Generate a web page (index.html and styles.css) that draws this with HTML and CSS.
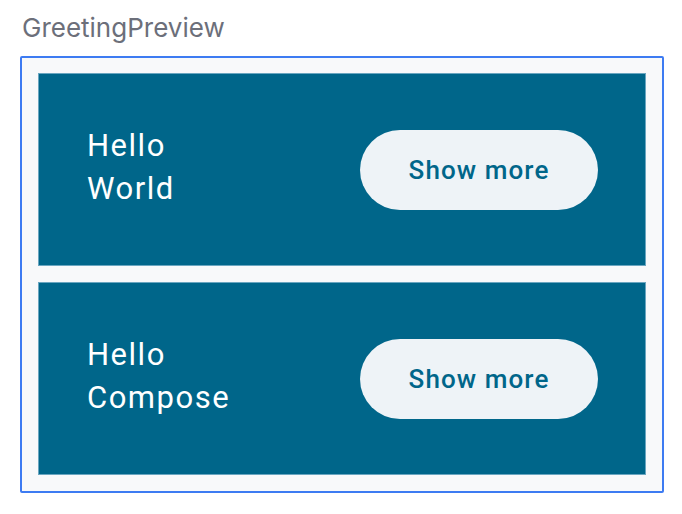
FILE: index.html
```html
<!DOCTYPE html>
<html>
<head>
<meta charset="utf-8">
<link rel="stylesheet" href="styles.css">
</head>
<body>
<div class="page">
  <div class="title">GreetingPreview</div>
  <div class="frame">
    <div class="card">
      <div class="greeting">Hello<br>World</div>
      <button class="btn">Show more</button>
    </div>
    <div class="card">
      <div class="greeting">Hello<br>Compose</div>
      <button class="btn">Show more</button>
    </div>
  </div>
</div>
</body>
</html>
```
FILE: styles.css
```css
html, body {
  margin: 0;
  padding: 0;
  background: #ffffff;
}
.page {
  padding: 11px 0 0 20px;
  display: flex;
  flex-direction: column;
}
.title {
  font-family: Inter, "Noto Sans", sans-serif;
  font-size: 26px;
  line-height: 34px;
  color: #6c6f7a;
  padding-left: 2px;
  margin-bottom: 11px;
}
.frame {
  width: 644px;
  box-sizing: border-box;
  border: 2px solid #3d7bf2;
  border-radius: 2px;
  background: #f8f9fa;
  padding: 15px 16px 16px 16px;
  display: flex;
  flex-direction: column;
  gap: 16px;
}
.card {
  height: 193px;
  box-sizing: border-box;
  background: #00668a;
  border: 1px solid #6aa6c0;
  padding: 0 47px 0 48px;
  display: flex;
  align-items: center;
  justify-content: space-between;
}
.greeting {
  font-family: Roboto, "Noto Sans", sans-serif;
  font-size: 31px;
  line-height: 43px;
  letter-spacing: 1.5px;
  color: #ffffff;
  margin-top: -6px;
}
.btn {
  width: 238px;
  height: 80px;
  border: none;
  border-radius: 40px;
  background: #eef3f7;
  color: #00668a;
  font-family: Roboto, "Noto Sans", sans-serif;
  font-weight: 500;
  font-size: 26px;
  letter-spacing: 1.1px;
  padding: 0;
}
```
